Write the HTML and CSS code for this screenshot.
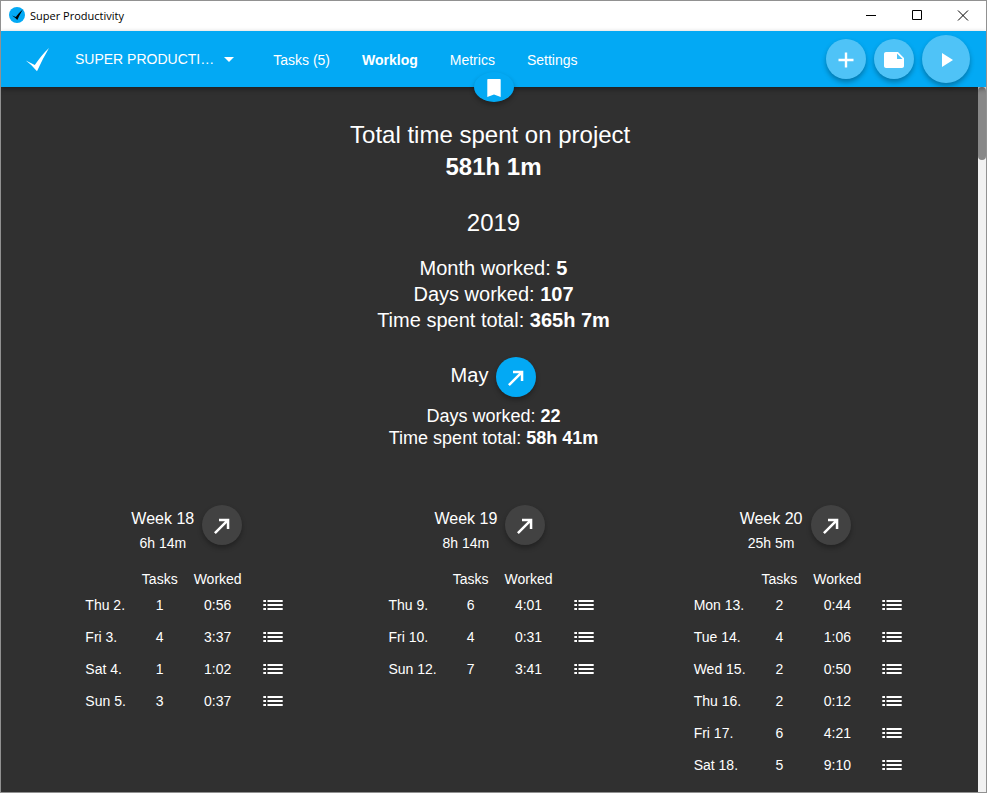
FILE: index.html
```html
<!DOCTYPE html>
<html lang="en">
<head>
<meta charset="utf-8">
<title>Super Productivity</title>
<link rel="stylesheet" href="styles.css">
</head>
<body>
<svg class="sprite" aria-hidden="true">
  <symbol id="arrow" viewBox="0 0 24 24"><path d="M9 4.700v2.500h6L4 18.200 5.800 20 16.800 9v6h2.500V4.700z"/></symbol>
  <symbol id="list" viewBox="0 0 24 24"><path d="M2.300 7H5v2H2.300zm0 4H5v2H2.300zm0 4H5v2H2.300zM6.500 7h15.200v2H6.500zm0 4h15.200v2H6.500zm0 4h15.200v2H6.500z"/></symbol>
  <symbol id="check" viewBox="0 0 24 24"><path d="M.8 12.500 9.800 17Q17 6.500 24 0 17.500 11 12 23.200 7 17 .8 12.500z"/></symbol>
</svg>
<div class="window">
  <div class="titlebar">
    <svg class="app-icon" viewBox="0 0 16 16"><circle cx="8" cy="8" r="8" fill="#03a9f4"/><path d="M3 8.500 6.800 10Q10 5.500 13.800 2.500 10.500 8 8.300 13 6 10.500 3 8.500z" fill="#000"/></svg>
    <span class="app-name">Super Productivity</span>
    <div class="window-buttons">
      <button aria-label="Minimize"><svg viewBox="0 0 10 10"><path d="M0 4.500h10"/></svg></button>
      <button aria-label="Maximize"><svg viewBox="0 0 10 10"><path d="M.5-.5h9v9h-9z"/></svg></button>
      <button aria-label="Close"><svg viewBox="0 0 10 10"><path d="M0-.5l10 10M10-.5L0 9.500"/></svg></button>
    </div>
  </div>
  <header class="header">
    <svg class="logo"><use href="#check"/></svg>
    <button class="project"><span>SUPER PRODUCTI…</span><svg viewBox="0 0 10 5"><path d="M0 0h10L5 5z"/></svg></button>
    <nav>
      <a href="#tasks">Tasks (5)</a>
      <a href="#worklog" class="active">Worklog</a>
      <a href="#metrics">Metrics</a>
      <a href="#settings">Settings</a>
    </nav>
    <div class="actions">
      <button class="fab light" aria-label="Add task"><svg viewBox="0 0 24 24"><path d="M19.500 13.200h-6.300v6.300h-2.400v-6.300H4.500v-2.400h6.300V4.500h2.400v6.300h6.300z"/></svg></button>
      <button class="fab light" aria-label="Notes"><svg viewBox="0 0 24 24"><path d="M22 10l-6-6H4c-1.100 0-2 .9-2 2v12.010c0 1.100.9 1.990 2 1.990l16-.010c1.100 0 2-.890 2-1.990zm-7-4.500l5.500 5.500H15z"/></svg></button>
      <button class="fab light large" aria-label="Start"><svg viewBox="0 0 24 24"><path d="M8 5v14l11-7z"/></svg></button>
    </div>
    <button class="bookmark" aria-label="Bookmarks"><svg viewBox="0 0 24 24"><path d="M18 3H6c-.4 0-.7.300-.7.700V21l6.700-2.600 6.700 2.600V3.700c0-.4-.3-.7-.7-.7z"/></svg></button>
  </header>
  <main>
    <div class="scrollbar"></div>
    <h1>Total time spent on project&nbsp;<br><strong>581h 1m</strong></h1>
    <h2>2019</h2>
    <div class="year-stats">
      <div>Month worked: <strong>5</strong></div>
      <div>Days worked: <strong>107</strong></div>
      <div>Time spent total: <strong>365h 7m</strong></div>
    </div>
    <div class="month"><h3>May</h3><button class="fab primary" aria-label="Export May"><svg><use href="#arrow"/></svg></button></div>
    <div class="month-stats">
      <div>Days worked: <strong>22</strong></div>
      <div>Time spent total: <strong>58h 41m</strong></div>
    </div>
    <div class="weeks">
      <section>
        <div class="week-head"><div><h4>Week 18</h4><p>6h 14m</p></div><button class="fab" aria-label="Export week 18"><svg><use href="#arrow"/></svg></button></div>
        <table>
          <thead><tr><th></th><th>Tasks</th><th>Worked</th><th></th></tr></thead>
          <tbody>
            <tr><td>Thu 2.</td><td>1</td><td>0:56</td><td><button aria-label="Show tasks"><svg><use href="#list"/></svg></button></td></tr>
            <tr><td>Fri 3.</td><td>4</td><td>3:37</td><td><button aria-label="Show tasks"><svg><use href="#list"/></svg></button></td></tr>
            <tr><td>Sat 4.</td><td>1</td><td>1:02</td><td><button aria-label="Show tasks"><svg><use href="#list"/></svg></button></td></tr>
            <tr><td>Sun 5.</td><td>3</td><td>0:37</td><td><button aria-label="Show tasks"><svg><use href="#list"/></svg></button></td></tr>
          </tbody>
        </table>
      </section>
      <section>
        <div class="week-head"><div><h4>Week 19</h4><p>8h 14m</p></div><button class="fab" aria-label="Export week 19"><svg><use href="#arrow"/></svg></button></div>
        <table>
          <thead><tr><th></th><th>Tasks</th><th>Worked</th><th></th></tr></thead>
          <tbody>
            <tr><td>Thu 9.</td><td>6</td><td>4:01</td><td><button aria-label="Show tasks"><svg><use href="#list"/></svg></button></td></tr>
            <tr><td>Fri 10.</td><td>4</td><td>0:31</td><td><button aria-label="Show tasks"><svg><use href="#list"/></svg></button></td></tr>
            <tr><td>Sun 12.</td><td>7</td><td>3:41</td><td><button aria-label="Show tasks"><svg><use href="#list"/></svg></button></td></tr>
          </tbody>
        </table>
      </section>
      <section>
        <div class="week-head"><div><h4>Week 20</h4><p>25h 5m</p></div><button class="fab" aria-label="Export week 20"><svg><use href="#arrow"/></svg></button></div>
        <table>
          <thead><tr><th></th><th>Tasks</th><th>Worked</th><th></th></tr></thead>
          <tbody>
            <tr><td>Mon 13.</td><td>2</td><td>0:44</td><td><button aria-label="Show tasks"><svg><use href="#list"/></svg></button></td></tr>
            <tr><td>Tue 14.</td><td>4</td><td>1:06</td><td><button aria-label="Show tasks"><svg><use href="#list"/></svg></button></td></tr>
            <tr><td>Wed 15.</td><td>2</td><td>0:50</td><td><button aria-label="Show tasks"><svg><use href="#list"/></svg></button></td></tr>
            <tr><td>Thu 16.</td><td>2</td><td>0:12</td><td><button aria-label="Show tasks"><svg><use href="#list"/></svg></button></td></tr>
            <tr><td>Fri 17.</td><td>6</td><td>4:21</td><td><button aria-label="Show tasks"><svg><use href="#list"/></svg></button></td></tr>
            <tr><td>Sat 18.</td><td>5</td><td>9:10</td><td><button aria-label="Show tasks"><svg><use href="#list"/></svg></button></td></tr>
          </tbody>
        </table>
      </section>
    </div>
  </main>
</div>
</body>
</html>
```
FILE: styles.css
```css
* { box-sizing: border-box; }
body, h1, h2, h3, h4, p { margin: 0; font-weight: normal; }
body {
  font: 14px/20px "Liberation Sans", Arial, sans-serif;
  color: #fff;
  background: #303030;
}
button {
  border: 0;
  padding: 0;
  background: none;
  color: inherit;
  font: inherit;
}
svg { display: block; fill: currentColor; }
.sprite { position: absolute; width: 0; height: 0; }

.window {
  display: flex;
  flex-direction: column;
  height: 100vh;
  border: 1px solid #919191;
  overflow: hidden;
}

.titlebar {
  display: flex;
  align-items: center;
  flex: 0 0 30px;
  padding-left: 8px;
  background: #fff;
  color: #000;
}
.app-icon { width: 16px; height: 16px; margin-bottom: 2px; }
.app-name {
  margin-left: 5px;
  font: 11px/16px "Open Sans", "Noto Sans", sans-serif;
}
.window-buttons { display: flex; margin-left: auto; }
.window-buttons button {
  display: grid;
  place-items: center;
  width: 46px;
  height: 30px;
}
.window-buttons svg {
  width: 10px;
  height: 10px;
  fill: none;
  stroke: #000;
  overflow: visible;
}

.header {
  position: relative;
  z-index: 1;
  display: flex;
  align-items: center;
  flex: 0 0 56px;
  padding: 0 16px 0 24px;
  background: #03a9f4;
  box-shadow: 0 2px 5px rgba(0, 0, 0, .4);
}
.logo { width: 24px; height: 24px; margin-top: 2px; }
.project {
  display: flex;
  align-items: center;
  gap: 10px;
  margin-left: 26px;
}
.project svg { width: 10px; height: 5px; }
nav {
  display: flex;
  gap: 32px;
  margin-left: 39px;
  padding-top: 2px;
}
nav a { color: inherit; text-decoration: none; }
nav .active { font-weight: bold; }
.actions {
  display: flex;
  align-items: center;
  gap: 8px;
  margin-left: auto;
}

.fab {
  display: grid;
  place-items: center;
  width: 40px;
  height: 40px;
  padding-top: 2px;
  border-radius: 50%;
  background: #424242;
  box-shadow: 0 3px 5px rgba(0, 0, 0, .3);
}
.fab svg { width: 24px; height: 24px; }
.fab.light { background: #4fc3f7; }
.fab.primary { background: #03a9f4; }
.fab.large { width: 48px; height: 48px; }

.bookmark {
  position: absolute;
  left: 50%;
  bottom: -15px;
  display: grid;
  place-items: center;
  width: 40px;
  height: 30px;
  margin-left: -20px;
  padding-top: 2px;
  border-radius: 50%;
  background: #03a9f4;
  box-shadow: 0 3px 5px rgba(0, 0, 0, .3);
}
.bookmark svg { width: 24px; height: 24px; }

main {
  position: relative;
  flex: 1;
  min-height: 0;
  overflow: hidden;
  padding-top: 32px;
  text-align: center;
}
.scrollbar {
  position: absolute;
  top: 0;
  right: 0;
  bottom: 0;
  width: 8px;
  background: #f1f1f1;
}
.scrollbar::before {
  content: "";
  display: block;
  height: 73px;
  border-radius: 4px;
  background: #888;
}
h1, h2 { font-size: 24px; line-height: 32px; }
h2 { margin-top: 24px; }
.year-stats { margin-top: 16px; font-size: 20px; line-height: 26px; }
.month {
  display: flex;
  justify-content: center;
  gap: 8px;
  margin-top: 24px;
}
h3 { font-size: 20px; line-height: 36px; }
.month-stats { margin-top: 8px; font-size: 18px; line-height: 22px; }

.weeks {
  display: grid;
  grid-template-columns: repeat(3, 1fr);
  justify-items: center;
  padding: 0 32px;
  margin-top: 56px;
}
.week-head { display: flex; gap: 8px; padding-left: 54px; }
h4 { font-size: 16px; line-height: 28px; }
.week-head p { line-height: 20px; }
table {
  border-collapse: collapse;
  margin-top: 16px;
}
th, td { padding: 0 8px; font-weight: normal; }
td { height: 32px; }
td:first-child { text-align: left; }
td:last-child { padding: 0 11px; }
td button { display: block; }
td svg { width: 24px; height: 24px; }
```
